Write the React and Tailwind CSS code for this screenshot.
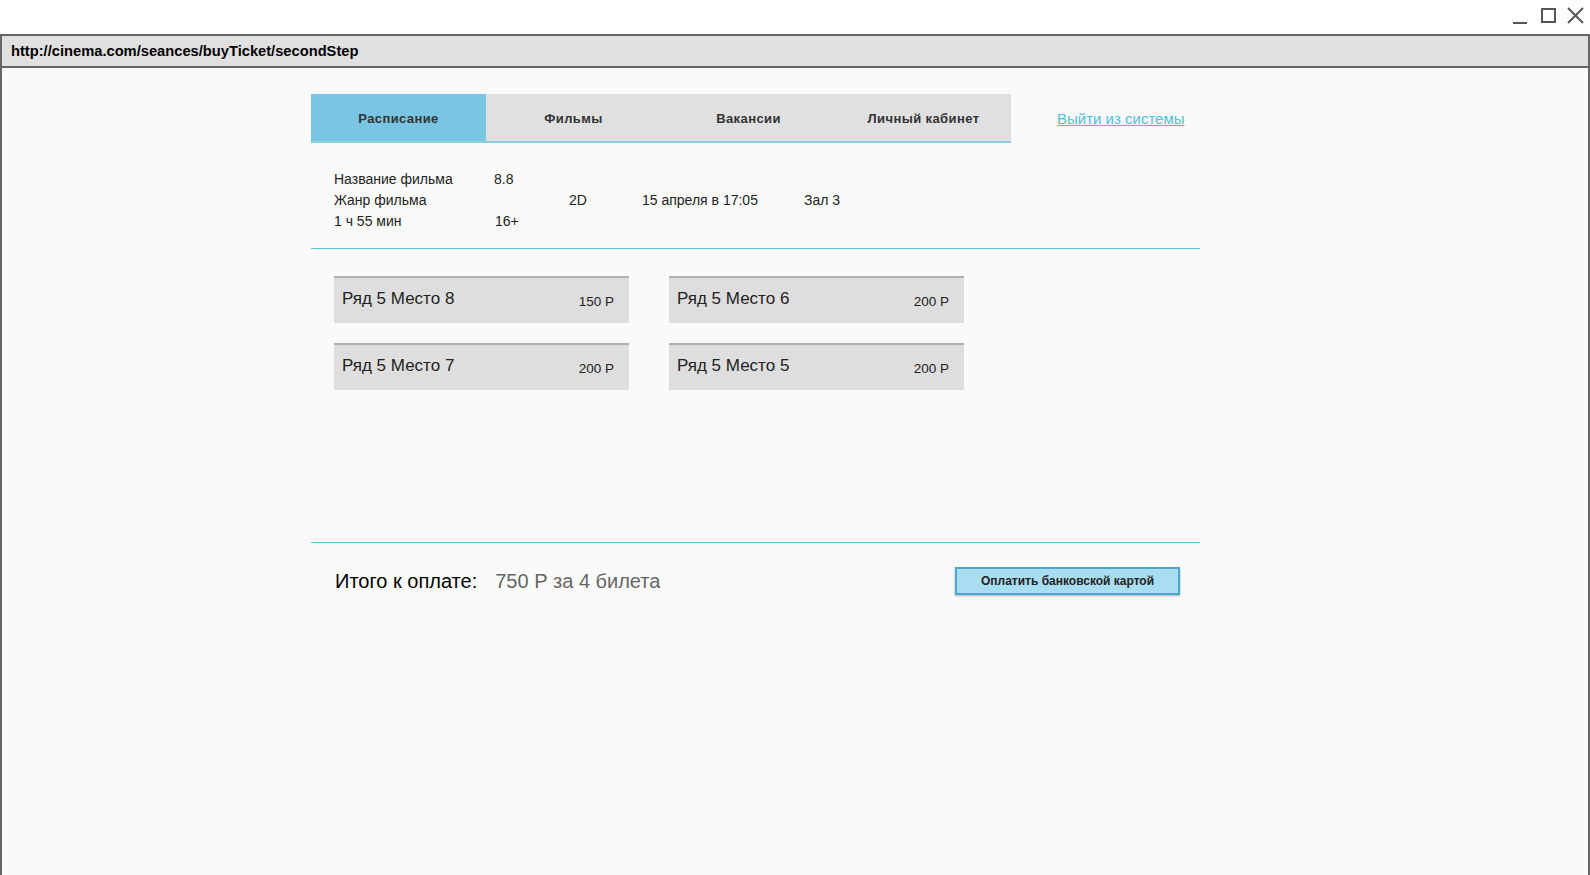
export default function App() {
  const font = { fontFamily: '"Liberation Sans", Arial, sans-serif' };
  const tabs = ["Расписание", "Фильмы", "Вакансии", "Личный кабинет"];
  const seats = [
    ["Ряд 5 Место 8", "150 Р"],
    ["Ряд 5 Место 6", "200 Р"],
    ["Ряд 5 Место 7", "200 Р"],
    ["Ряд 5 Место 5", "200 Р"],
  ];
  return (
    <div className="w-[1590px] h-[875px] flex flex-col overflow-hidden bg-white" style={font}>
      <div className="h-[34px] shrink-0 bg-white flex justify-end items-start pr-[5px]">
        <svg width="80" height="34" viewBox="0 0 80 34" fill="none" stroke="#555" strokeWidth="2">
          <line x1="8" y1="23" x2="22" y2="23" />
          <rect x="37" y="9" width="13" height="13" />
          <line x1="63" y1="8" x2="78" y2="23" />
          <line x1="78" y1="8" x2="63" y2="23" />
        </svg>
      </div>
      <div className="h-[34px] shrink-0 border-2 border-[#666] bg-[#e0e0e0] flex items-center pl-[9px]">
        <span className="text-[14.7px] font-bold text-black mt-[1px]">http://cinema.com/seances/buyTicket/secondStep</span>
      </div>
      <div className="flex-1 bg-[#fafafa] border-x-2 border-[#666]">
        <div className="ml-[309px] w-[889px] pt-[26px]">
          <div className="flex items-center">
            <div className="w-[700px] h-[49px] flex border-b-2 border-[#8ccde2]">
              {tabs.map((t, i) => (
                <div
                  key={t}
                  className={
                    "w-[175px] h-full flex items-center justify-center text-[13px] font-bold tracking-[0.4px] text-[#333] pt-[2px] " +
                    (i === 0 ? "bg-[#7ac5e3]" : "bg-[#e0e0e0]")
                  }
                >
                  {t}
                </div>
              ))}
            </div>
            <a className="ml-[46px] mt-[2px] text-[15px] text-[#4fbfe0] underline cursor-pointer">Выйти из системы</a>
          </div>

          <div className="mt-[26px] pl-[23px] text-[14px] leading-[21px] text-[#222]">
            <div className="flex">
              <span className="w-[160px]">Название фильма</span>
              <span>8.8</span>
            </div>
            <div className="flex">
              <span className="w-[235px]">Жанр фильма</span>
              <span className="w-[73px]">2D</span>
              <span className="w-[162px]">15 апреля в 17:05</span>
              <span>Зал 3</span>
            </div>
            <div className="flex">
              <span className="w-[161px]">1 ч 55 мин</span>
              <span>16+</span>
            </div>
          </div>

          <div className="mt-[16px] border-t border-[#5cc3da]" />

          <div className="mt-[27px] pl-[23px] grid grid-cols-[295px_295px] gap-x-[40px] gap-y-[20px]">
            {seats.map(([l, p]) => (
              <div key={l} className="h-[47px] border-t-2 border-[#b0b0b0] bg-[#dedede] flex justify-between pl-[8px] pr-[15px]">
                <span className="text-[17px] text-[#222] mt-[11px] leading-[20px]">{l}</span>
                <span className="text-[13.5px] text-[#222] mt-[15px] leading-[18px]">{p}</span>
              </div>
            ))}
          </div>

          <div className="mt-[152px] border-t border-[#5cc3da]" />

          <div className="mt-[23px] flex items-center pl-[24px] pr-[20px]">
            <span className="text-[20px] text-black">Итого к оплате:</span>
            <span className="ml-[18px] text-[20px] text-[#666]">750 Р за 4 билета</span>
            <button className="ml-auto w-[225px] h-[28px] bg-[#a9ddf2] border-2 border-[#4aa8cf] shadow-[0_1px_2px_rgba(0,0,0,0.3)] text-[12px] font-bold text-[#222]">
              Оплатить банковской картой
            </button>
          </div>
        </div>
      </div>
    </div>
  );
}
